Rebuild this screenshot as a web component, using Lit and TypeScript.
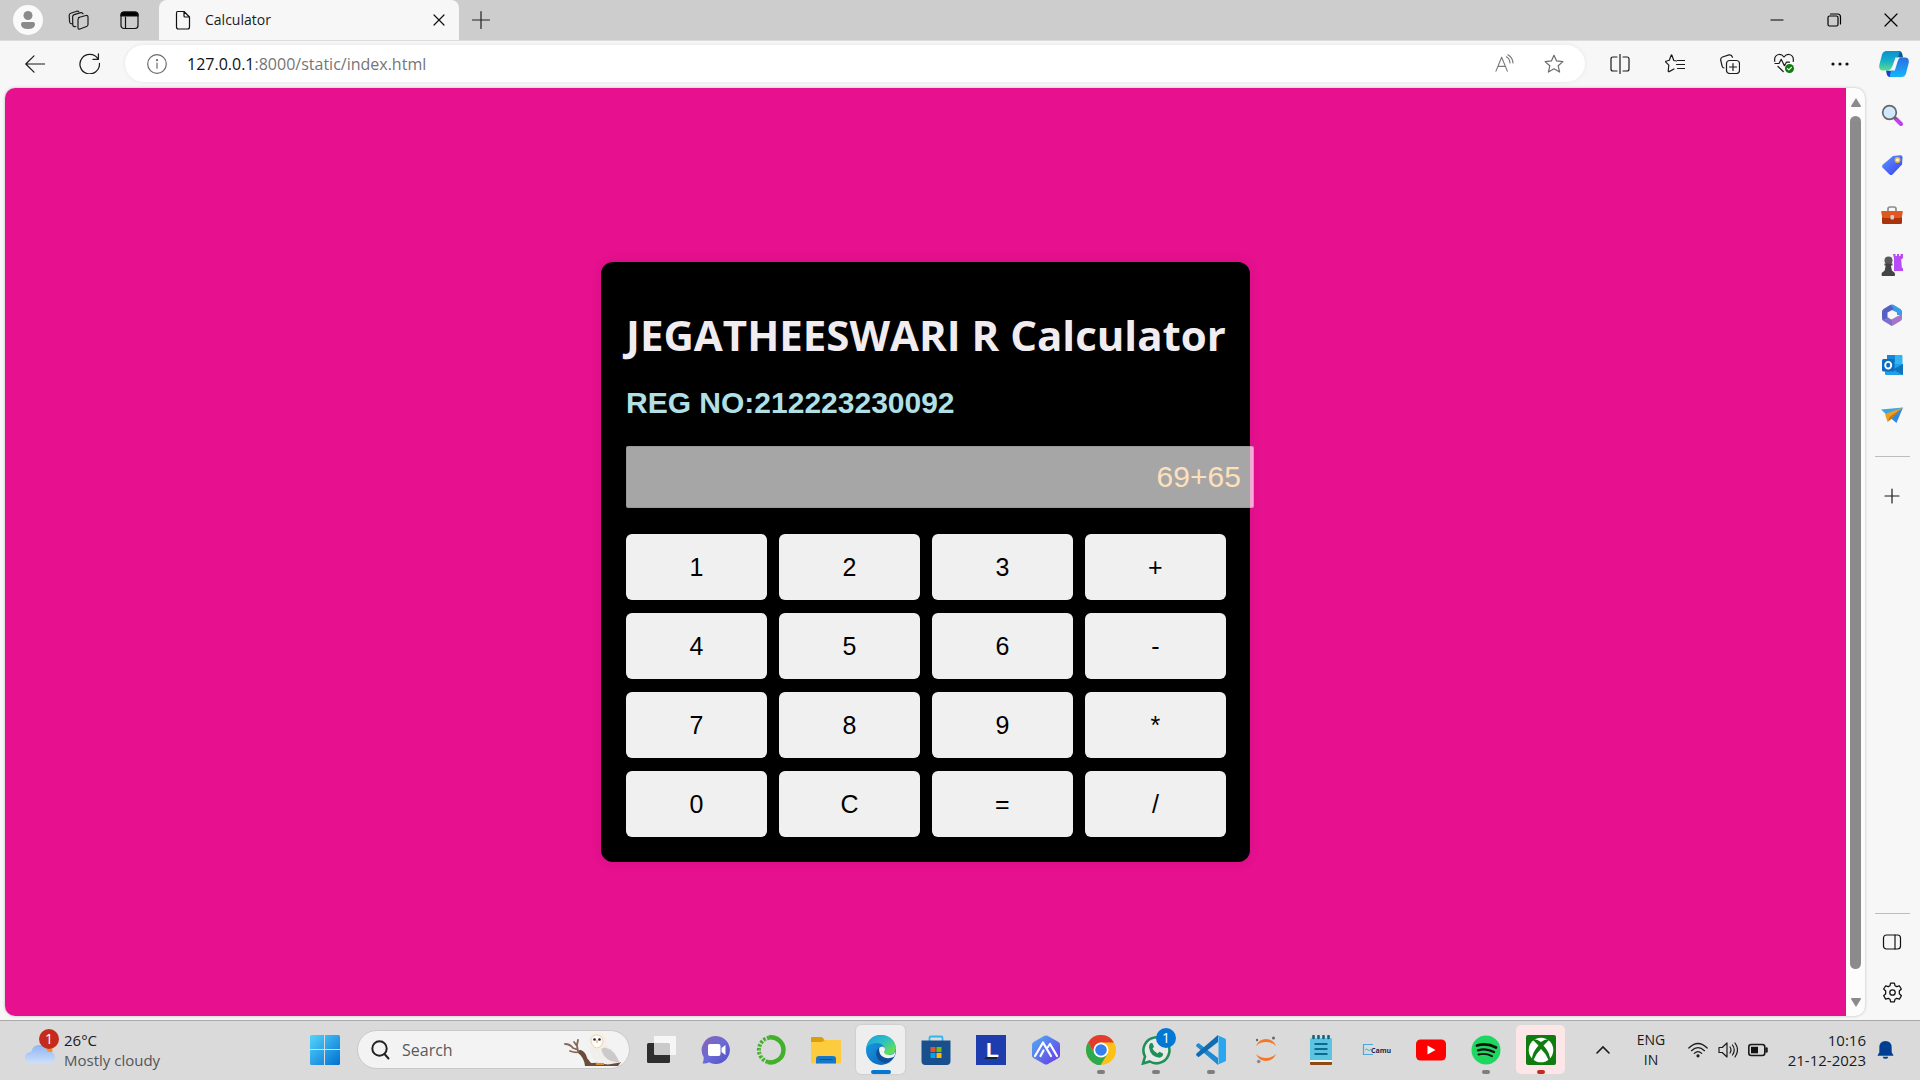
import { LitElement, html, css, svg, TemplateResult } from "lit";
import { customElement, state } from "lit/decorators.js";
import { classMap } from "lit/directives/class-map.js";

const line = (body: TemplateResult, size = 20, box = 20, color = "#1b1b1b") => html`<svg
  width=${size} height=${size} viewBox="0 0 ${box} ${box}" fill="none" stroke=${color}
  stroke-width="1.2" stroke-linecap="round" stroke-linejoin="round" aria-hidden="true">${body}</svg>`;

const art = (body: TemplateResult, size = 30, box = 30) => html`<svg
  width=${size} height=${size} viewBox="0 0 ${box} ${box}" aria-hidden="true">${body}</svg>`;

const star = "M10 1.2 L12.6 6.9 L18.9 7.6 L14.2 11.8 L15.6 18.1 L10 14.8 L4.4 18.1 L5.8 11.8 L1.1 7.6 L7.4 6.9 Z";

const icons = {
  profile: art(svg`<circle cx="15" cy="15" r="15" fill="#fafafa"/><circle cx="15" cy="10.5" r="4.5" fill="#8b8b8b"/>
    <path d="M10 17h10q2 0 2 2.200q0 4.800-7 4.800t-7-4.800q0-2.200 2-2.200z" fill="#8b8b8b"/>`),
  workspaces: line(svg`<path d="M10.500 7.500l7.500-2q2-.4 2 1.600v7.400q0 1.500-1.500 2l-6.500 2.500q-2 .7-2-1.300v-8.200q0-1.600 1.500-2z"/>
    <path d="M7.800 16.500q-2.800.5-3-1.500L4.600 7q0-1.800 1.600-2.400l6.600-2q1.600-.4 2.200 1.200"/>
    <path d="M4.500 13.800q-2.700.2-2.900-1.800L1.200 5.400q0-1.700 1.500-2.200L8.800 1.200q1.400-.4 2 .6"/>`, 21, 21),
  tabActions: line(svg`<rect x="2" y="2" width="17" height="16.500" rx="3"/><path d="M2 6V5q0-3 3-3h11q3 0 3 3v1z" fill="#000"/><path d="M6.500 7v11.500"/>`, 21, 21, "#111"),
  file: line(svg`<path d="M4.500 1.500H11l5.500 5.500v10q0 2-2 2h-9q-2 0-2-2V3q0-1.500 1-1.500zM11 1.500V6q0 1 1 1h4.500"/>`, 20, 20, "#111"),
  tabClose: line(svg`<path d="M5 5l10 10M15 5L5 15"/>`, 20, 20, "#111"),
  plus: line(svg`<path d="M10 1.500v17M1.500 10h17"/>`, 20, 20, "#222"),
  min: line(svg`<path d="M4 10h12"/>`, 20, 20, "#000"),
  max: line(svg`<rect x="4" y="6" width="10" height="10" rx="1.500"/><path d="M6.500 4h7q3 0 3 3v7"/>`, 20, 20, "#000"),
  close: line(svg`<path d="M4 4l12 12M16 4L4 16"/>`, 20, 20, "#000"),
  back: line(svg`<path d="M19.500 10H1M9 1.800L.8 10L9 18.200"/>`, 20, 20),
  refresh: line(svg`<path d="M18 5.500A9.300 9.300 0 1 0 19.500 10M18.500 .8v5.200h-5.200"/>`, 21, 20),
  info: line(svg`<circle cx="10" cy="10" r="9.300"/><path d="M10 9v5.200"/><circle cx="10" cy="6.200" r=".5"/>`, 20, 20, "#6b6b6b"),
  aloud: line(svg`<path d="M1 18L7 3.500L13 18M3.200 13h7.600M12 3q3.500 2 3.800 6.500M13.500 .8q5 2.800 5.500 8.500"/>`, 19, 20, "#7a7a7a"),
  star: line(svg`<path d=${star}/>`, 20, 20, "#6b6b6b"),
  split: line(svg`<path d="M7 3H3q-2 0-2 2v10q0 2 2 2h4M13 3h4q2 0 2 2v10q0 2-2 2h-4M10 .5v19"/>`),
  favs: line(svg`<path d="M11.500 7L8.800 6.500L6.900 1.200Q6.600 .6 6.200 1.200L4.300 6.200L1 7.200Q.2 7.600 .8 8.200L3.800 11.200L3.200 17q.1 1 .9.600L9 15M12.500 6.500H20M11.500 10.500H20M12.500 14.500H20"/>`),
  collections: line(svg`<rect x="6.500" y="6.500" width="13" height="13" rx="3"/><path d="M13 9.500v7M9.500 13h7M4 14q-1.600-.3-1.900-2L.7 6.200Q.4 3.800 2.500 3L9 .9q2.600-.6 3.500 2.300"/>`),
  health: line(svg`<path d="M.8 8.500Q-.2 2.500 4.800 1.500q3.200-.3 5.200 2.500q2-2.800 5.200-2.500Q20.200 2.500 19.200 8.500M1 10.500h4l2.200-4.200l3.200 6.400l2-3.500h3M4 13.500l5.200 5"/>
    <circle cx="15.500" cy="15.500" r="4.500" fill="#107c10" stroke="none"/><path d="M13.500 15.600l1.400 1.300l2.500-2.500" stroke="#fff"/>`, 21, 21),
  dots: line(svg`<g fill="#111" stroke="none"><circle cx="3" cy="10" r="1.600"/><circle cx="10" cy="10" r="1.600"/><circle cx="17" cy="10" r="1.600"/></g>`),
  copilot: art(svg`<defs><linearGradient id="a" x1="0" y1="0" x2="0" y2="1"><stop offset="0" stop-color="#0a8fd0"/><stop offset=".5" stop-color="#15b0c8"/><stop offset="1" stop-color="#5fdc8c"/></linearGradient>
    <linearGradient id="b" x1="0" y1="0" x2="0" y2="1"><stop offset="0" stop-color="#2a6fe0"/><stop offset="1" stop-color="#16b4fa"/></linearGradient></defs>
    <path d="M14 2h6q2.500 0 3.300 3l.8 3.500h-6z" fill="#0b5a8c"/>
    <path d="M16 28h-5q-2.500 0-3.300-3L7 21.500h6z" fill="#1a3fd0"/>
    <path d="M7.500 2H19q2 .2 1.300 2.500L15.500 18.500Q14.500 21.500 11.500 21.500H4Q-.5 21.500.3 16L3 5.500Q4.200 2 7.500 2z" fill="url(#a)"/>
    <path d="M22.500 28H12q-1.500-.3-1-2.500L14.800 12q1-3.500 4-3.500H26q4.500 0 3.700 5.500L27 24.500Q25.800 28 22.500 28z" fill="url(#b)"/>
    <path d="M16.500 8.500h4.500q-1.500 1-2.200 3.500L15.800 21.500H9.500q2.700-.8 3.600-3.700z" fill="#f7f7f7"/>`),
  magnifier: art(svg`<path d="M14.500 14.500l5.500 5.500" stroke="#c23cf0" stroke-width="4" stroke-linecap="round"/><path d="M13 13l2 2" stroke="#666" stroke-width="2"/>
    <circle cx="8.500" cy="8.500" r="6.800" fill="#cfe8fb" stroke="#666" stroke-width="1.700"/>`, 22, 22),
  tag: art(svg`<defs><linearGradient id="tg" x1="0" y1="0" x2="1" y2="1"><stop offset="0" stop-color="#5b9bff"/><stop offset="1" stop-color="#3a3cf0"/></linearGradient></defs>
    <path d="M12 2l7.500-.8q2 0 2 2L21 10.500L11.500 20.500q-1.500 1.200-3 0L1.500 13.500q-1-1.300.2-2.700z" fill="url(#tg)"/><circle cx="16.500" cy="6" r="2.200" fill="#fff" stroke="#f0b822" stroke-width="1.600"/>`, 22, 22),
  toolbox: art(svg`<path d="M7 7V5q0-2 2-2h4q2 0 2 2v2" fill="none" stroke="#8b8b8b" stroke-width="1.700"/><rect x="1" y="12" width="20" height="8" rx="1.500" fill="#a8330c"/>
    <path d="M1 7h20q1 0 .8 1l-1 5q-.2 1-1.200 1H2.400q-1 0-1.200-1L.2 8Q0 7 1 7z" fill="#e2561f"/><rect x="9.500" y="11" width="3.500" height="4.500" rx="1" fill="#d0d0d0"/>`, 22, 22),
  games: art(svg`<path d="M12 0h2.500v2h1.500V0h2v2h1.500V0H22v4l-1.800 1.500.6 8 1.700 1.500v2h-9.500V4.500z" fill="#b74cf5"/>
    <circle cx="7.500" cy="6.500" r="4" fill="#5a5a5a"/><path d="M3.500 9.500h8v2h-1.600l1 5 3 2.500v3H.7v-3l3-2.500 1-5H3.500z" fill="#444"/>`, 22, 22),
  m365: art(svg`<path d="M9.500.8q1.500-.8 3 0L19.500 5Q21 6 21 7.500V11h-5V8.500L11 6z" fill="#3a9be6"/>
    <path d="M9.500.8L2.500 5Q1 6 1 7.500V14q0 2 1.500 3l4-3V8.500L13 5z" fill="#5560c4"/>
    <path d="M21 10v4.500q0 1.500-1.500 2.500l-7 4.200q-1.500.8-3 0V16l6.500-3.500z" fill="#a475c8"/>
    <path d="M1 13q1 3 3.500 2.500L6.500 13l4.500 3v5.800q-.8 0-1.500-.6L2.500 17Q1 16 1 14z" fill="#7d6fd0"/>`, 22, 22),
  outlook: art(svg`<rect x="6" y="1" width="15.500" height="14" rx="1" fill="#33b4f0"/><path d="M6 1h8v7H6z" fill="#1687d4"/><path d="M4 10l18 0v10q0 1-1 1H5q-1 0-1-1z" fill="#1ea0e6"/><path d="M22 10v11L12 15.500z" fill="#1372bd"/>
    <rect x="1" y="5" width="12.500" height="12.500" rx="1.500" fill="#0a6cc4"/><ellipse cx="7.200" cy="11.200" rx="3" ry="3.300" fill="none" stroke="#fff" stroke-width="1.900"/>`, 22, 22),
  plane: art(svg`<path d="M0 5.500L22 3.500L8 13z" fill="#36a8e8"/><path d="M22 3.500L15.500 19L9 13.500z" fill="#2b8ae6"/><path d="M22 3.500L4 10l2.500 8L10 12.500z" fill="#f0a01e"/><path d="M22 3.500L9 12.500L6.500 18l4-3z" fill="#c87810"/>`, 22, 22),
  sidePlus: line(svg`<path d="M10 3v14M3 10h14"/>`),
  sidePane: line(svg`<rect x="1.500" y="3" width="17" height="14" rx="3"/><path d="M13 3v14"/>`, 20, 20, "#111"),
  gear: line(svg`<path d="M8.200 1h3.600l.6 2.500 1.600.9 2.500-.8 1.900 3.100-1.900 1.900v2.600l2 1.900-1.900 3.200-2.600-.8-1.600.9-.6 2.600H8.200l-.6-2.600L6 15.500l-2.500.8L1.600 13.100l1.900-1.900V8.600L1.600 6.700l1.900-3.100 2.500.8 1.600-.9z"/><circle cx="10" cy="10" r="2.600"/>`, 21, 20, "#111"),
  weather: art(svg`<defs><linearGradient id="cl" x1="0" y1="0" x2="0" y2="1"><stop offset="0" stop-color="#8fb4f4"/><stop offset="1" stop-color="#cfe0fa"/></linearGradient></defs>
    <circle cx="21" cy="15" r="6.500" fill="#f5921e"/><path d="M7 28.500q-7 0-7-6 0-5 6-5.500Q8 10 14 10q7 0 8.500 6.500Q30 16.500 30 22.500t-7 6z" fill="url(#cl)"/>`),
  windows: art(svg`<defs><linearGradient id="wn" x1="0" y1="0" x2="1" y2="1"><stop offset="0" stop-color="#55d4fc"/><stop offset="1" stop-color="#0070d2"/></linearGradient></defs>
    <path d="M1.500 0H14v14H0V1.500Q0 0 1.500 0zM15 0h13.500Q30 0 30 1.500V14H15zM0 15h14v15H1.500Q0 30 0 28.500zM15 15h15v13.500q0 1.500-1.500 1.500H15z" fill="url(#wn)"/>`),
  search: html`<svg width="20" height="20" viewBox="0 0 20 20" fill="none" stroke="#222" stroke-width="2" stroke-linecap="round" aria-hidden="true"><circle cx="9.500" cy="8.500" r="7.200"/><path d="M14.500 14l4 4.500"/></svg>`,
  owl: html`<svg width="60" height="36" viewBox="0 0 60 36" aria-hidden="true">
    <path d="M1 12q5 0 8 4l8 3q4 2 5 8M6 19q5 2 9 1M10 10l3 4 1 5M14 8l-1 5" fill="none" stroke="#85695a" stroke-width="1.800" stroke-linecap="round"/>
    <path d="M16 18q6 2 7 8l4 5 30-1-3 4H21q-1-9-7-13z" fill="#6b4c3a"/>
    <path d="M26 14q-1 11 8 17l10 1.500 12-2Q53 22 44 14q-2-2-4-2-6 4-14 2z" fill="#f1efec"/><path d="M37 15q10 1 14 7l5 9-9-2q-9-4-10-14z" fill="#cbcac8"/>
    <path d="M25 9q-1-8 7-8.500Q41 0 42 7q1 9-6 10.500Q26 18 25 9z" fill="#f6efe4"/><path d="M27 9q0-6 5.500-6T39 9q-1 6-6 7-5-1-6-7z" fill="#fffdf8" stroke="#dfc4a0" stroke-width=".7"/>
    <circle cx="30.500" cy="7.500" r="1.300" fill="#22243a"/><circle cx="35.500" cy="7.500" r="1.300" fill="#22243a"/><path d="M33 8v3" stroke="#d39c6c" stroke-width="1"/><path d="M32 31h8v2h-8z" fill="#dc8b2c"/></svg>`,
  taskview: art(svg`<rect x="1" y="8" width="23" height="20" rx="1.500" fill="#2e2e2e"/><rect x="8" y="1" width="22" height="19" rx="1" fill="#fff" fill-opacity=".75"/>`),
  meet: art(svg`<defs><linearGradient id="mt" x1="0" y1="0" x2="1" y2="1"><stop offset="0" stop-color="#8a62b0"/><stop offset=".5" stop-color="#6a6bd8"/><stop offset="1" stop-color="#4f50c0"/></linearGradient></defs>
    <path d="M15 1a14 14 0 1 1-7 26.200q-3 1.800-6.500 1.200Q3 25.500 2.600 22A14 14 0 0 1 15 1z" fill="url(#mt)"/><rect x="7" y="9" width="12.500" height="12" rx="2" fill="#fff"/><path d="M20.500 13l4-3v10l-4-3z" fill="#fff"/>`),
  anaconda: art(svg`<path d="M13 2.500A12.500 12.500 0 1 1 12 27" fill="none" stroke="#43b02a" stroke-width="4.500"/><path d="M12 27A12.500 12.500 0 0 1 13 2.700" fill="none" stroke="#43b02a" stroke-width="4" stroke-dasharray="2.500 1.400"/><path d="M10 25A11 11 0 0 1 10 5" fill="none" stroke="#9fd68e" stroke-width="1" stroke-dasharray="1 2"/>`),
  folder: art(svg`<path d="M0 3q0-1 1-1h9q1 0 2 1l1.500 2H29v8H0z" fill="#dc9d0a"/><path d="M0 7h11l3-2h15q1 0 1 1v21q0 1.500-1.500 1.500h-27Q0 28.500 0 27z" fill="#fdcb3e"/><path d="M5 28.500V24q0-3 3-3h14q3 0 3 3v4.500z" fill="#1678c8"/><path d="M8.500 24.500h13" stroke="#0c4f8c" stroke-width="1"/>`),
  edge: art(svg`<defs><linearGradient id="e1" x1="0" y1="0" x2="1" y2="1"><stop offset="0" stop-color="#189fe0"/><stop offset=".45" stop-color="#2cc1c4"/><stop offset=".8" stop-color="#62dc5c"/></linearGradient><linearGradient id="e2" x1="0" y1="0" x2="1" y2="1"><stop offset="0" stop-color="#1aa0e4"/><stop offset="1" stop-color="#0a5bb4"/></linearGradient></defs>
    <circle cx="15" cy="15" r="15" fill="url(#e2)"/><path d="M.5 12Q3 .2 15 0q14 1 15 13.500-.4 6.500-7.500 6.500-5 0-5-2.300 1.500-1 1.500-3.200-1-6-8-6.500Q4 8 .5 12z" fill="url(#e1)"/>
    <path d="M13 13q-4 3-2.500 8 2 6 9 7 5-1 8.500-6.300-4 2.300-8.500 1.300Q12.500 21 13 13z" fill="#124f98"/><path d="M18 17.700q2 3 6.500 2.200 3.500-.4 5-3.400-.2 3-1.500 5.200-5 2.500-9.500.8-6-2-5.300-9.500 1-1.500 3-1.500 2.800.5 2.800 3-.2 1.500-1 3.200z" fill="#f2f2f2"/>`),
  store: art(svg`<path d="M8.500 7V3q0-1.500 1.500-1.500h10q1.500 0 1.500 1.500v4" fill="none" stroke="#30b8ee" stroke-width="1.800"/><path d="M.5 5.500h29V26q0 4-4 4h-21q-4 0-4-4z" fill="#17508c"/><path d="M9.500 12h5v5h-5z" fill="#f25022"/><path d="M15.500 12h5v5h-5z" fill="#7fba00"/><path d="M9.500 18h5v5h-5z" fill="#00a4ef"/><path d="M15.500 18h5v5h-5z" fill="#ffb900"/>`),
  lapp: art(svg`<rect width="30" height="30" fill="#1d3dae"/><path d="M8 24l4-3h9v3z" fill="#123"/><text x="10" y="22" font-family="Liberation Sans, sans-serif" font-weight="700" font-size="21" fill="#fff">L</text>`),
  hex: art(svg`<defs><linearGradient id="hx" x1="0" y1="0" x2="1" y2="1"><stop offset="0" stop-color="#4fb0f4"/><stop offset="1" stop-color="#6a35e8"/></linearGradient></defs><path d="M13.500.8q1.500-.8 3 0l11 6.200q1.500 1 1.500 2.500v11q0 1.500-1.500 2.500l-11 6.200q-1.500.8-3 0L2.500 23Q1 22 1 20.500v-11Q1 8 2.500 7z" fill="url(#hx)"/>
    <path d="M4 21L12 7.500L20 21M9.500 21L12.500 15.500M17 12l2-3L26 21" fill="none" stroke="#fff" stroke-width="2.200" stroke-linecap="round" stroke-linejoin="round"/>`),
  chrome: art(svg`<circle cx="15" cy="15" r="15" fill="#fbc116"/><path d="M21.500 18.700L14.600 30q-3 0-5.600-1.200L15 20z" fill="#2da94f"/><path d="M2 7.500A15 15 0 0 1 28 7.500H15q-5 .5-7 5.500L8.500 18.700z" fill="#e33b2e"/><path d="M2 7.500l6.500 11.200L15 22l-1 8A15 15 0 0 1 2 7.500z" fill="#2da94f"/><circle cx="15" cy="15" r="7.500" fill="#fff"/><circle cx="15" cy="15" r="5.800" fill="#357ff0"/>`),
  whatsapp: art(svg`<path d="M2 28.500l2-7A13 13 0 1 1 8.800 26.500z" fill="#e8e8e8" stroke="#1f9058" stroke-width="2.600"/><path d="M9 8.500q1-1 2.500-.2l1.500 3.500-1.500 2q1.500 3 5 4.700l2-1.700 3.500 1.800q.4 3.400-3.400 4.100Q9.500 22 8 12.500 8 10 9 8.500z" fill="#1f9058"/>`),
  vscode: art(svg`<path d="M0 10l2.500-2L22 23v7L.5 11.500z" fill="#1f8ad2"/><path d="M0 20l2.500 2.200L22 7V0L.5 18.500z" fill="#0f6cb4"/><path d="M21 0l8 3.500q1 .5 1 1.500v20q0 1-1 1.500L21 30q1.500-.5 1.500-2.500v-25Q22.500 1 21 0z" fill="#2aa6f0"/>`),
  jupyter: art(svg`<path d="M5 11q3-7 10-7t10 7q-4-4-10-4T5 11zM5 19q3 7 10 7t10-7q-4 4-10 4T5 19z" fill="#f37726"/><circle cx="22.500" cy="3" r="1.500" fill="#666"/><circle cx="6" cy="5" r="1.200" fill="#666"/><circle cx="7.700" cy="26.500" r="1.800" fill="#8a8a8a"/>`),
  notepad: art(svg`<path d="M4 26h22v3q0 1-1 1H5q-1 0-1-1z" fill="#8c4a14"/><rect x="4" y="3" width="22" height="23" rx="1.500" fill="#5cc4e0"/><path d="M4 25h22v2H4z" fill="#eef6f8"/><path d="M8.500 9h13M8.500 14h13M8.500 19h13" stroke="#0c6a90" stroke-width="1.800"/><path d="M7.500 1v2M12.500 1v2M17.500 1v2M22.500 1v2" stroke="#17607c" stroke-width="2.600" stroke-linecap="round"/>`),
  camu: art(svg`<path d="M12 9.500H2.500v10H12" fill="none" stroke="#4aa8dc" stroke-width="1.200"/><path d="M4 15q1.500-2 3 0t3-1" stroke="#4aa8dc" fill="none"/><text x="10" y="17.500" font-family="Open Sans, sans-serif" font-weight="700" font-size="7" fill="#1c2b50">Camu</text>`),
  youtube: art(svg`<rect y="4.500" width="30" height="21" rx="4.500" fill="#f00"/><path d="M11.500 10.500v9l8-4.500z" fill="#fff"/>`),
  spotify: art(svg`<circle cx="15" cy="15" r="14.500" fill="#1ed760"/><path d="M6 10.500q10-3 19 2" fill="none" stroke="#111" stroke-width="2.800" stroke-linecap="round"/><path d="M7 15.300q8.500-2.400 16 1.800" fill="none" stroke="#111" stroke-width="2.300" stroke-linecap="round"/><path d="M7.500 19.500q7-1.800 13.500 1.700" fill="none" stroke="#111" stroke-width="1.900" stroke-linecap="round"/>`),
  xbox: art(svg`<rect width="30" height="30" rx="2" fill="#107c10"/><circle cx="15" cy="15" r="12.300" fill="#fff"/><path d="M6.500 4.500q4-1 8.500 2.500 4.500-3.500 8.500-2.500L20 8l-2.500 2.500Q24.500 18 24 25.500l-1.500-.5Q20 18.500 15 14q-5 4.500-7.500 11l-1.500.5Q5.500 18 12.500 10.500L10 8z" fill="#107c10"/>`),
  chevron: html`<svg width="14" height="14" viewBox="0 0 14 14" fill="none" stroke="#1b1b1b" stroke-width="1.600" stroke-linecap="round" aria-hidden="true"><path d="M1 10l6-6 6 6"/></svg>`,
  wifi: line(svg`<path d="M.8 8q9.200-9 18.400 0M3.500 10.700q6.500-6.300 13 0M6.300 13.400q3.700-3.500 7.400 0"/><circle cx="10" cy="15.800" r="1" fill="#222"/>`),
  speaker: line(svg`<path d="M1 7.500h3.200L9 3v14L4.200 12.500H1zM12 7q2 3 0 6M14.500 5q3.500 5 0 10M17 3q5 7 0 14"/>`),
  battery: line(svg`<rect x=".8" y="4.500" width="16" height="11" rx="2.500" stroke-width="1.600"/><rect x="3" y="6.800" width="7" height="6.500" fill="#111" stroke="none"/><path d="M18.500 8.500v3" stroke-width="2.500"/>`),
  bell: art(svg`<path d="M10 1q6.500 0 6.500 7v5l2 3.500H1.500l2-3.500V8q0-7 6.500-7zM7 17.500h6q-.5 2.300-3 2.300t-3-2.300z" fill="#003e92"/>`, 19, 20),
};

type IconName = keyof typeof icons;

@customElement("calc-card")
export class CalcCard extends LitElement {
  @state() private expression = "69+65";

  static styles = css`
    :host { display: block; font-family: "Liberation Sans", Arial, sans-serif; }
    .card { background: #000; border-radius: 12px; padding: 25px; box-shadow: 0 0 12px rgba(0, 0, 0, 0.1); display: grid; gap: 26px; }
    h1, h2 { margin: 0; white-space: nowrap; }
    h1 { margin-top: 23px; font: 700 42px/50px "Open Sans", "Noto Sans", sans-serif; color: #f0ecf0; }
    h2 { font-size: 30px; line-height: 34px; color: #b0e0e6; }
    .display { box-sizing: content-box; height: 36px; width: calc(100% + 2px); justify-self: start; min-width: 0; margin: 0; padding: 12px; border: 1px solid rgba(120, 120, 120, 0.3); border-radius: 2px;
      background: rgba(255, 255, 255, 0.65); color: #ffe0bc; font: 30px/36px "Liberation Sans", Arial, sans-serif; text-align: right; outline: none; }
    .keys { display: grid; grid-template-columns: repeat(4, 1fr); gap: 13px 12px; }
    .key { height: 66px; border: 0; border-radius: 6px; background: #f0f0f0; color: #000; font: 25px/30px "Liberation Sans", Arial, sans-serif; padding: 0; cursor: pointer; }
    .key:hover { background: #e2e2e2; }
  `;

  private press(key: string) {
    if (key === "C") this.expression = "";
    else if (key === "=") this.expression = this.evaluate(this.expression);
    else this.expression += key;
  }

  private evaluate(source: string): string {
    const tokens = source.match(/\d+\.?\d*|[+\-*/]/g);
    if (!tokens) return "";
    const terms: number[] = [Number(tokens[0])];
    for (let i = 1; i + 1 < tokens.length; i += 2) {
      const value = Number(tokens[i + 1]);
      if (tokens[i] === "+") terms.push(value);
      else if (tokens[i] === "-") terms.push(-value);
      else if (tokens[i] === "*") terms.push(terms.pop()! * value);
      else terms.push(terms.pop()! / value);
    }
    return String(terms.reduce((sum, term) => sum + term, 0));
  }

  render() {
    return html`<section class="card">
      <h1>JEGATHEESWARI R Calculator</h1>
      <h2>REG NO:212223230092</h2>
      <input class="display" type="text" aria-label="Expression" readonly .value=${this.expression} />
      <div class="keys">
        ${[..."123+456-789*0C=/"].map((key) => html`<button class="key" @click=${() => this.press(key)}>${key}</button>`)}
      </div>
    </section>`;
  }
}

interface TaskApp { icon: IconName; label: string; state?: "running" | "active" | "alert"; badge?: string; }

@customElement("app-root")
export class AppRoot extends LitElement {
  static styles = css`
    :host { display: flex; flex-direction: column; min-height: 100vh; background: #f7f7f7; color: #1b1b1b; font-family: "Open Sans", "Noto Sans", sans-serif; font-size: 14px; line-height: 20px; }
    button { border: 0; background: none; padding: 0; margin: 0; color: inherit; font: inherit; display: flex; align-items: center; justify-content: center; }
    svg { display: block; flex: none; }

    .tabs { height: 40px; background: #cdcdcd; display: flex; align-items: stretch; padding: 0 1px 0 2px; }
    .strip-btn { width: 51px; }
    .tab { width: 300px; background: #f7f7f7; border-radius: 8px 8px 0 0; display: flex; align-items: center; gap: 12px; padding: 0 10px 0 14px; box-sizing: border-box; margin-left: 4px; }
    .tab-title { flex: 1; font-size: 14px; padding-bottom: 1px; }
    .new-tab { width: 43px; }
    .window-controls { margin-left: auto; display: flex; }
    .win-btn { width: 57px; }

    .toolbar { height: 48px; display: flex; align-items: center; border-top: 1px solid #dcdcdc; box-sizing: border-box; padding: 0 0 2px 7px; }
    .tool-btn { width: 55px; height: 40px; }
    .tool-btn:last-child { width: 53px; }
    .address { flex: 1; height: 37px; margin: 0 7px 0 8px; border-radius: 19px; background: #fff; box-shadow: 0 0 4px rgba(0, 0, 0, 0.08); display: flex; align-items: center; padding: 0 7px 0 22px; }
    .url { flex: 1; margin-left: 20px; font-size: 16px; line-height: 24px; color: #757575; }
    .host { color: #111; }
    .addr-btn { width: 49px; height: 36px; }

    .body { flex: 1; display: flex; }
    .page { flex: 1; display: flex; margin: 0 0 4px 5px; border-radius: 10px; overflow: hidden; background: #fcfcfc; box-shadow: 0 0 3px rgba(0, 0, 0, 0.25); }
    .canvas { flex: 1; background: #e7108f; display: flex; align-items: center; justify-content: center; padding-top: 20px; }
    .calc { width: 649px; }
    .scrollbar { width: 19px; display: flex; flex-direction: column; align-items: center; gap: 9px; padding: 10px 0 9px; }
    .thumb { flex: 1; width: 11px; border-radius: 6px; background: #8b8b8b; margin-bottom: 20px; }

    .sidebar { width: 54px; margin-left: 1px; display: flex; flex-direction: column; align-items: center; padding: 2px 2px 3px 0; box-sizing: border-box; }
    .side-btn { width: 50px; height: 50px; }
    .rule { width: 35px; height: 1px; background: #bdbdbd; margin: 16px 0 14px; }
    .rule-low { margin: auto 0 3px; }

    .taskbar { height: 60px; box-sizing: border-box; border-top: 1px solid #a9a9a9; background: #dadadb; display: flex; align-items: center; padding-bottom: 2px; }
    .side-area { flex: 1; display: flex; }
    .weather { position: relative; gap: 9px; margin-left: 25px; text-align: left; font-size: 15px; }
    .muted { color: #555; }
    .badge { position: absolute; left: 14px; top: -1px; width: 20px; height: 20px; border-radius: 10px; background: #c42b1c; color: #fff; font-size: 14px; line-height: 20px; text-align: center; }
    .apps { display: flex; align-items: center; }
    .slot { width: 55px; height: 57px; position: relative; }
    .slot::before { content: ""; position: absolute; left: 3px; right: 3px; top: 4px; bottom: 4px; border-radius: 5px; }
    .slot svg { position: relative; }
    .active::before { background: #eeeeee; box-shadow: 0 0 2px rgba(0, 0, 0, 0.15); }
    .alert::before { background: #fde6e8; }
    .mark { position: absolute; left: 50%; margin-left: -4px; bottom: 4px; width: 8px; height: 4px; border-radius: 2px; background: #7d7d7d; }
    .active .mark { width: 20px; margin-left: -10px; background: #0078d4; }
    .alert .mark { background: #c42b1c; }
    .count { position: absolute; left: 28px; top: 7px; width: 20px; height: 20px; border-radius: 10px; background: #0078d4; color: #fff; line-height: 20px; }
    .search { width: 273px; height: 39px; box-sizing: border-box; margin: 0 3px 0 5px; border-radius: 20px; background: #f3f3f3; border: 1px solid #c9c9c9; display: flex; align-items: center; gap: 12px; padding: 0 5px 0 12px; }
    .search-input { flex: 1; min-width: 0; border: 0; padding: 0; background: none; outline: none; font: 16px/22px "Open Sans", "Noto Sans", sans-serif; color: #222; }
    .search-input::placeholder { color: #5a5a5a; opacity: 1; }
    .tray { width: 352px; box-sizing: border-box; display: flex; align-items: center; padding: 0 25px 0 28px; }
    .lang { width: 60px; margin-left: 11px; text-align: center; display: block; }
    .status { gap: 10px; margin-left: 7px; }
    .clock { margin-left: auto; margin-right: 10px; text-align: right; display: block; font-size: 15px; }
  `;

  private apps: TaskApp[] = [
    { icon: "taskview", label: "Task view" },
    { icon: "meet", label: "Chat" },
    { icon: "anaconda", label: "Anaconda Navigator" },
    { icon: "folder", label: "File Explorer" },
    { icon: "edge", label: "Microsoft Edge", state: "active" },
    { icon: "store", label: "Microsoft Store" },
    { icon: "lapp", label: "L" },
    { icon: "hex", label: "Assistant" },
    { icon: "chrome", label: "Google Chrome", state: "running" },
    { icon: "whatsapp", label: "WhatsApp", state: "running", badge: "1" },
    { icon: "vscode", label: "Visual Studio Code", state: "running" },
    { icon: "jupyter", label: "Jupyter" },
    { icon: "notepad", label: "Notepad" },
    { icon: "camu", label: "Camu" },
    { icon: "youtube", label: "YouTube" },
    { icon: "spotify", label: "Spotify", state: "running" },
    { icon: "xbox", label: "Xbox", state: "alert" },
  ];

  private iconButton(cls: string, icon: IconName, label: string) {
    return html`<button class=${cls} aria-label=${label}>${icons[icon]}</button>`;
  }

  private renderTabs() {
    return html`<header class="tabs">
      ${this.iconButton("strip-btn", "profile", "Profile")}
      ${this.iconButton("strip-btn", "workspaces", "Workspaces")}
      ${this.iconButton("strip-btn", "tabActions", "Tab actions")}
      <div class="tab">${icons.file}<span class="tab-title">Calculator</span>${this.iconButton("tab-close", "tabClose", "Close tab")}</div>
      ${this.iconButton("new-tab", "plus", "New tab")}
      <div class="window-controls">
        ${this.iconButton("win-btn", "min", "Minimize")}
        ${this.iconButton("win-btn", "max", "Restore")}
        ${this.iconButton("win-btn", "close", "Close")}
      </div>
    </header>`;
  }

  private renderToolbar() {
    return html`<nav class="toolbar">
      ${this.iconButton("tool-btn", "back", "Back")}
      ${this.iconButton("tool-btn", "refresh", "Refresh")}
      <div class="address">
        ${this.iconButton("site-info", "info", "Site information")}
        <span class="url"><span class="host">127.0.0.1</span>:8000/static/index.html</span>
        ${this.iconButton("addr-btn", "aloud", "Read aloud")}
        ${this.iconButton("addr-btn", "star", "Add to favorites")}
      </div>
      ${this.iconButton("tool-btn", "split", "Split screen")}
      ${this.iconButton("tool-btn", "favs", "Favorites")}
      ${this.iconButton("tool-btn", "collections", "Collections")}
      ${this.iconButton("tool-btn", "health", "Browser essentials")}
      ${this.iconButton("tool-btn", "dots", "Settings and more")}
      ${this.iconButton("tool-btn", "copilot", "Copilot")}
    </nav>`;
  }

  private renderSidebar() {
    const tools: [IconName, string][] = [["magnifier", "Search"], ["tag", "Shopping"], ["toolbox", "Tools"], ["games", "Games"], ["m365", "Microsoft 365"], ["outlook", "Outlook"], ["plane", "Drop"]];
    return html`<aside class="sidebar">
      ${tools.map(([icon, label]) => this.iconButton("side-btn", icon, label))}
      <div class="rule"></div>
      ${this.iconButton("side-btn", "sidePlus", "Customize")}
      <div class="rule rule-low"></div>
      ${this.iconButton("side-btn", "sidePane", "Hide sidebar")}
      ${this.iconButton("side-btn", "gear", "Settings")}
    </aside>`;
  }

  private renderTaskbar() {
    return html`<footer class="taskbar">
      <div class="side-area">
        <button class="weather">${icons.weather}<span class="badge">1</span><span>26°C<br /><span class="muted">Mostly cloudy</span></span></button>
      </div>
      <div class="apps">
        ${this.iconButton("slot", "windows", "Start")}
        <label class="search">${icons.search}<input class="search-input" type="text" placeholder="Search" aria-label="Search" />${icons.owl}</label>
        ${this.apps.map((app) => html`<button
          class=${classMap({ slot: true, active: app.state === "active", alert: app.state === "alert" })}
          aria-label=${app.label}>
          ${icons[app.icon]}
          ${app.state ? html`<span class="mark"></span>` : ""}
          ${app.badge ? html`<span class="count">${app.badge}</span>` : ""}
        </button>`)}
      </div>
      <div class="tray">
        ${this.iconButton("more", "chevron", "Show hidden icons")}
        <button class="lang">ENG<br />IN</button>
        <button class="status" aria-label="Network, volume and battery">${icons.wifi}${icons.speaker}${icons.battery}</button>
        <button class="clock">10:16<br />21-12-2023</button>
        ${this.iconButton("bell", "bell", "Notifications")}
      </div>
    </footer>`;
  }

  render() {
    return html`
      ${this.renderTabs()} ${this.renderToolbar()}
      <div class="body">
        <main class="page">
          <div class="canvas"><calc-card class="calc"></calc-card></div>
          <div class="scrollbar" aria-hidden="true">
            <svg width="12" height="9" viewBox="0 0 12 9"><path d="M6 0l5 8q0 1-1 1H2q-1 0-1-1z" fill="#8b8b8b"/></svg>
            <div class="thumb"></div>
            <svg width="12" height="9" viewBox="0 0 12 9"><path d="M6 9L1 1q0-1 1-1h8q1 0 1 1z" fill="#8b8b8b"/></svg>
          </div>
        </main>
        ${this.renderSidebar()}
      </div>
      ${this.renderTaskbar()}
    `;
  }
}
